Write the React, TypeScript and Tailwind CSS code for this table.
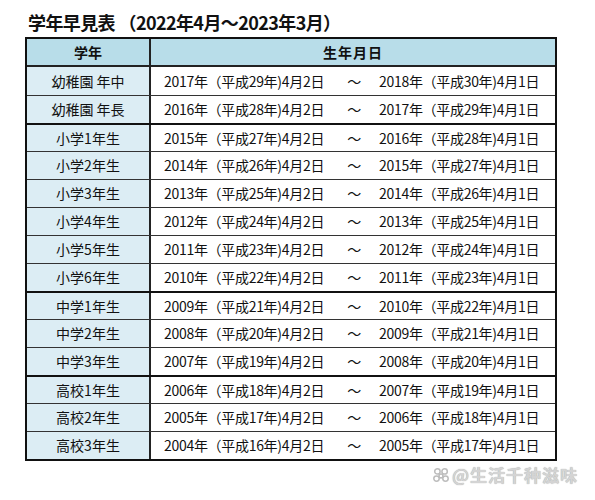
const rows: { grade: string; from: string; to: string; group?: boolean }[] = [
  { grade: "幼稚園 年中", from: "2017年（平成29年)4月2日", to: "2018年（平成30年)4月1日" },
  { grade: "幼稚園 年長", from: "2016年（平成28年)4月2日", to: "2017年（平成29年)4月1日" },
  { grade: "小学1年生", from: "2015年（平成27年)4月2日", to: "2016年（平成28年)4月1日", group: true },
  { grade: "小学2年生", from: "2014年（平成26年)4月2日", to: "2015年（平成27年)4月1日" },
  { grade: "小学3年生", from: "2013年（平成25年)4月2日", to: "2014年（平成26年)4月1日" },
  { grade: "小学4年生", from: "2012年（平成24年)4月2日", to: "2013年（平成25年)4月1日" },
  { grade: "小学5年生", from: "2011年（平成23年)4月2日", to: "2012年（平成24年)4月1日" },
  { grade: "小学6年生", from: "2010年（平成22年)4月2日", to: "2011年（平成23年)4月1日" },
  { grade: "中学1年生", from: "2009年（平成21年)4月2日", to: "2010年（平成22年)4月1日", group: true },
  { grade: "中学2年生", from: "2008年（平成20年)4月2日", to: "2009年（平成21年)4月1日" },
  { grade: "中学3年生", from: "2007年（平成19年)4月2日", to: "2008年（平成20年)4月1日" },
  { grade: "高校1年生", from: "2006年（平成18年)4月2日", to: "2007年（平成19年)4月1日", group: true },
  { grade: "高校2年生", from: "2005年（平成17年)4月2日", to: "2006年（平成18年)4月1日" },
  { grade: "高校3年生", from: "2004年（平成16年)4月2日", to: "2005年（平成17年)4月1日" },
];

function Paw() {
  return (
    <svg width="18" height="18" viewBox="0 0 20 20" className="mr-[2px]">
      <g fill="none" stroke="#bdbdbd" strokeWidth="1.7">
        <circle cx="6" cy="6" r="3" />
        <circle cx="14" cy="6" r="3" />
        <circle cx="5" cy="14" r="3" />
        <circle cx="15" cy="14" r="3" />
        <circle cx="10" cy="11" r="2.2" />
      </g>
    </svg>
  );
}

export default function App() {
  return (
    <div
      className="w-[595px] h-[500px] bg-white relative text-[#111]"
      style={{ fontFamily: '"Noto Sans CJK JP", "Noto Sans", sans-serif' }}
    >
      <div className="pt-[11px] pl-[28px] h-[37px]">
        <h1 className="text-[18px] leading-[22px] font-bold tracking-[-0.6px]">
          学年早見表 （2022年4月～2023年3月）
        </h1>
      </div>

      <div className="ml-[25px] w-[532px] border-[2.5px] border-[#111]">
        {/* header */}
        <div className="flex h-[28px] bg-[#b8dde9] border-b-2 border-[#222]">
          <div className="w-[124px] border-r-2 border-[#222] flex items-center justify-center text-[14px] font-bold">
            学年
          </div>
          <div className="flex-1 flex items-center justify-center text-[14px] font-bold tracking-[1px]">
            生年月日
          </div>
        </div>

        {rows.map((r, i) => (
          <div
            key={r.grade}
            className={
              "flex h-[28px] " +
              (i === 0 ? "" : r.group ? "border-t-2 border-[#111]" : "border-t border-[#333]")
            }
          >
            <div className="w-[124px] bg-[#dcedf4] border-r-2 border-[#222] flex items-center justify-center text-[14px]">
              {r.grade}
            </div>
            <div className="flex-1 grid grid-cols-[170px_40px_1fr] items-center text-[14px] pl-[13px] tracking-[-0.3px]">
              <span className="whitespace-nowrap">{r.from}</span>
              <span className="text-center">～</span>
              <span className="whitespace-nowrap pl-[5px]">{r.to}</span>
            </div>
          </div>
        ))}
      </div>

      <div
        className="absolute left-[432px] top-[462px] flex items-center text-[17px] font-bold text-[#d4d4d4] tracking-[1px]"
        style={{ textShadow: "0 0 1px #999" }}
      >
        <Paw />
        <span>@生活千种滋味</span>
      </div>
    </div>
  );
}
